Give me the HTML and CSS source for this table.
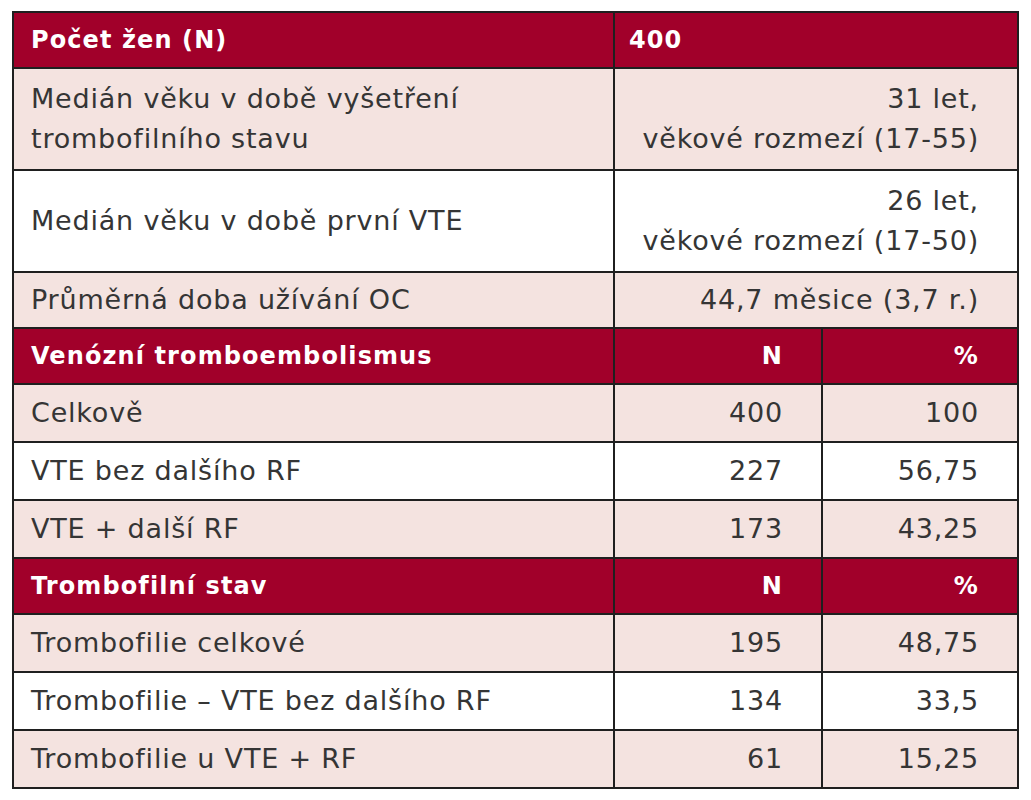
FILE: index.html
```html
<!DOCTYPE html>
<html lang="cs">
<head>
<meta charset="utf-8">
<title>Tabulka</title>
<link rel="stylesheet" href="styles.css">
</head>
<body>
<table class="data">
  <colgroup>
    <col class="c1"><col class="c2"><col class="c3">
  </colgroup>
  <tbody>
    <tr class="head">
      <td>Počet žen (N)</td>
      <td colspan="2">400</td>
    </tr>
    <tr class="pink double">
      <td>Medián věku v době vyšetření<br>trombofilního stavu</td>
      <td colspan="2" class="num">31 let,<br>věkové rozmezí (17-55)</td>
    </tr>
    <tr class="white double">
      <td>Medián věku v době první VTE</td>
      <td colspan="2" class="num">26 let,<br>věkové rozmezí (17-50)</td>
    </tr>
    <tr class="pink short">
      <td>Průměrná doba užívání OC</td>
      <td colspan="2" class="num">44,7 měsice (3,7 r.)</td>
    </tr>
    <tr class="head">
      <td>Venózní tromboembolismus</td>
      <td class="num">N</td>
      <td class="num">%</td>
    </tr>
    <tr class="pink">
      <td>Celkově</td>
      <td class="num">400</td>
      <td class="num">100</td>
    </tr>
    <tr class="white">
      <td>VTE bez dalšího RF</td>
      <td class="num">227</td>
      <td class="num">56,75</td>
    </tr>
    <tr class="pink">
      <td>VTE + další RF</td>
      <td class="num">173</td>
      <td class="num">43,25</td>
    </tr>
    <tr class="head">
      <td>Trombofilní stav</td>
      <td class="num">N</td>
      <td class="num">%</td>
    </tr>
    <tr class="pink">
      <td>Trombofilie celkové</td>
      <td class="num">195</td>
      <td class="num">48,75</td>
    </tr>
    <tr class="white">
      <td>Trombofilie – VTE bez dalšího RF</td>
      <td class="num">134</td>
      <td class="num">33,5</td>
    </tr>
    <tr class="pink">
      <td>Trombofilie u VTE + RF</td>
      <td class="num">61</td>
      <td class="num">15,25</td>
    </tr>
  </tbody>
</table>
</body>
</html>
```

FILE: styles.css
```css
html, body {
  margin: 0;
  padding: 0;
  background: #ffffff;
}
body {
  padding: 11px 12px;
  font-family: "DejaVu Sans", sans-serif;
  color: #353535;
}
.data {
  border-collapse: collapse;
  width: 1005px;
  table-layout: fixed;
}
.c1 { width: 601px; }
.c2 { width: 208px; }
.c3 { width: 196px; }
.data td {
  border: 2px solid #1f1f1f;
  font-size: 27px;
  letter-spacing: 0.8px;
  line-height: 40px;
  padding: 8px 38px 8px 17px;
  vertical-align: middle;
  white-space: nowrap;
}
.data .num {
  text-align: right;
}
.head td {
  background: #a1002a;
  color: #ffffff;
  font-weight: bold;
  font-size: 24px;
  letter-spacing: 1.1px;
  padding-top: 7px;
  padding-bottom: 7px;
}
.head td:nth-child(2) {
  padding-left: 14px;
}
.pink td {
  background: #f4e3e0;
}
.white td {
  background: #ffffff;
}
.double td {
  padding-top: 10px;
  padding-bottom: 10px;
}
.short td {
  padding-top: 7px;
  padding-bottom: 7px;
}
```
